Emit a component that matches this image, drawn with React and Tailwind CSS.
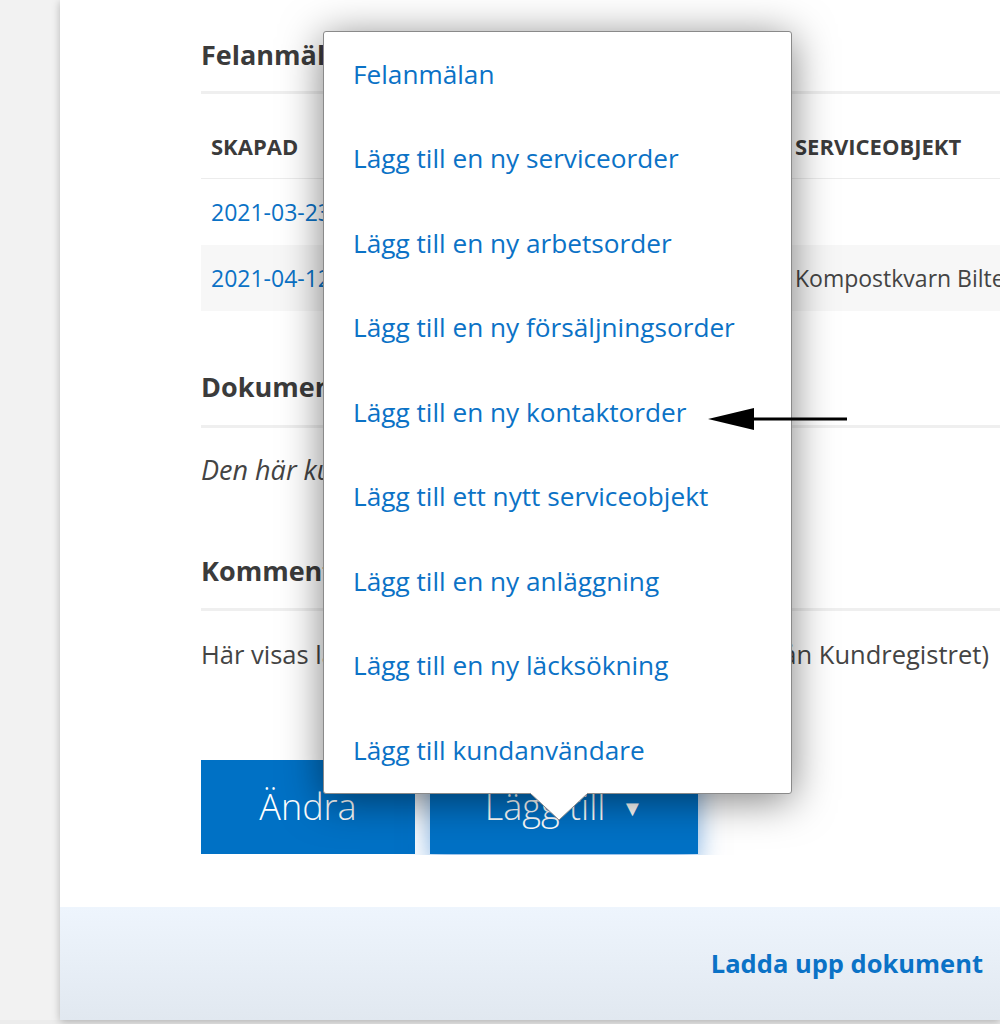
const menuItems = [
  'Felanmälan',
  'Lägg till en ny serviceorder',
  'Lägg till en ny arbetsorder',
  'Lägg till en ny försäljningsorder',
  'Lägg till en ny kontaktorder',
  'Lägg till ett nytt serviceobjekt',
  'Lägg till en ny anläggning',
  'Lägg till en ny läcksökning',
  'Lägg till kundanvändare',
];

const rows = [
  { created: '2021-03-23', object: '' },
  { created: '2021-04-12', object: 'Kompostkvarn Biltema' },
];

function SectionTitle({ children, className = '' }) {
  return (
    <h2 className={`text-[27px] leading-[32px] font-bold text-[#3b3b3b] whitespace-nowrap ${className}`}>
      {children}
    </h2>
  );
}

function Divider({ className = '' }) {
  return <div className={`h-[3px] bg-[#efefef] ${className}`} />;
}

export default function App() {
  return (
    <div
      className="relative w-[1000px] h-[1024px] overflow-hidden bg-[#ececec]"
      style={{ fontFamily: '"Open Sans", "Noto Sans", sans-serif' }}
    >
      <div className="flex h-[1020px]">
        {/* left gutter */}
        <div className="w-[60px] shrink-0 bg-[#f2f2f2]" />

        {/* card */}
        <div className="flex-1 min-w-0 flex flex-col bg-white shadow-[0_2px_8px_rgba(0,0,0,0.25)]">
          <div className="flex-1 min-w-0 overflow-hidden pl-[141px] pt-[39px]">
            <SectionTitle>Felanmälningar</SectionTitle>
            <Divider className="mt-[20px]" />

            {/* table */}
            <div className="text-[23px]">
              <div className="grid grid-cols-[584px_1fr] h-[85px] pt-[36px] border-b border-[#ececec] font-bold uppercase text-[22px] text-[#3b3b3b] leading-[32px]">
                <div className="pl-[10px]">Skapad</div>
                <div className="pl-[10px] whitespace-nowrap">Serviceobjekt</div>
              </div>
              {rows.map((row, i) => (
                <div
                  key={row.created}
                  className={`grid grid-cols-[584px_1fr] h-[66px] items-center ${i % 2 === 1 ? 'bg-[#f7f7f7]' : ''}`}
                >
                  <a className="pl-[10px] text-[#0b72c6]">{row.created}</a>
                  <div className="pl-[10px] whitespace-nowrap text-[#444]">{row.object}</div>
                </div>
              ))}
            </div>

            <SectionTitle className="mt-[60px]">Dokument</SectionTitle>
            <Divider className="mt-[22px]" />
            <p className="mt-[27px] text-[27px] leading-[30px] italic text-[#444] whitespace-nowrap">
              Den här kunden har inga dokument ännu
            </p>

            <SectionTitle className="mt-[70px]">Kommentarer</SectionTitle>
            <Divider className="mt-[21px]" />
            <p className="mt-[28px] text-[25.5px] leading-[30px] text-[#444] whitespace-nowrap">
              Här visas lagda kommentarer på kund (hämtas från Kundregistret)
            </p>

            <div className="mt-[91px] flex gap-[15px]">
              <button className="w-[214px] h-[94px] bg-[#0071c5] text-white text-[36px] font-light">
                Ändra
              </button>
              <button className="w-[268px] h-[94px] bg-[#0071c5] text-white text-[36px] font-light flex items-center justify-center gap-[16px] shadow-[0_10px_24px_rgba(0,100,200,0.5)]">
                Lägg till
                <span className="text-[22px]">▼</span>
              </button>
            </div>
          </div>

          {/* footer */}
          <div className="h-[113px] mt-[52px] bg-gradient-to-b from-[#eef5fd] to-[#e1e8f0] flex items-center justify-end pr-[17px]">
            <a className="text-[25.5px] font-bold text-[#0b72c6] whitespace-nowrap">Ladda upp dokument</a>
          </div>
        </div>
      </div>

      {/* dropdown menu */}
      <div className="absolute left-[323px] top-[31px] w-[469px] h-[763px] bg-white border border-[#8a8a8a] rounded-[3px] shadow-[0_6px_42px_rgba(0,0,0,0.5)]">
        <ul className="flex flex-col">
          {menuItems.map((item) => (
            <li key={item} className="h-[84.5px] flex items-center pl-[29px] text-[26.2px] text-[#0b72c6] whitespace-nowrap">
              {item}
            </li>
          ))}
        </ul>
        <svg className="absolute left-[205px] top-[760px]" width="60" height="30" viewBox="0 0 60 30">
          <path d="M1 1 L30 28 L59 1" fill="#ffffff" stroke="#8a8a8a" strokeWidth="1" />
          <rect x="2" y="0" width="56" height="2" fill="#ffffff" />
        </svg>
      </div>

      {/* annotation arrow */}
      <svg className="absolute left-[706px] top-[406px]" width="144" height="26" viewBox="0 0 144 26">
        <path d="M2 13 L48 2 L48 24 Z" fill="#000" />
        <rect x="46" y="11.5" width="95" height="3" fill="#000" />
      </svg>
    </div>
  );
}
